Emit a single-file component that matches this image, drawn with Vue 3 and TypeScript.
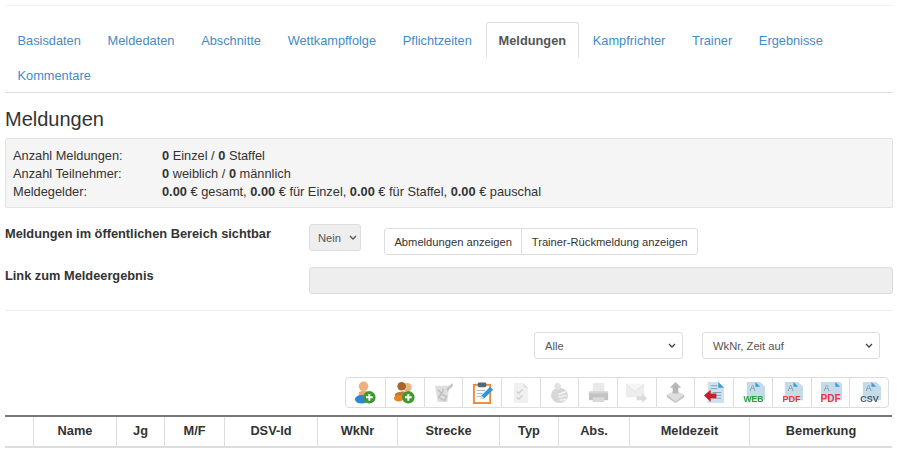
<script setup lang="ts">
const tabs: string[] = ['Basisdaten','Meldedaten','Abschnitte','Wettkampffolge','Pflichtzeiten','Meldungen','Kampfrichter','Trainer','Ergebnisse','Kommentare']
const cols: string[] = ['','Name','Jg','M/F','DSV-Id','WkNr','Strecke','Typ','Abs.','Meldezeit','Bemerkung']
const docs = [
  { label: 'WEB', color: '#2e9e44', size: 9, x: 5 },
  { label: 'PDF', color: '#ef3340', size: 9.5, x: 5 },
  { label: 'PDF', color: '#ef3340', size: 10.5, x: 2 },
  { label: 'CSV', color: '#4a5a66', size: 9.5, x: 5 },
]
</script>

<template>
  <div class="page">
    <div class="topline"></div>
    <ul class="tabs">
      <li v-for="t in tabs" :key="t" :class="{ active: t === 'Meldungen' }"><a>{{ t }}</a></li>
    </ul>
    <h3>Meldungen</h3>
    <div class="well">
      <div class="wrow"><span class="k">Anzahl Meldungen:</span><span><b>0</b> Einzel / <b>0</b> Staffel</span></div>
      <div class="wrow"><span class="k">Anzahl Teilnehmer:</span><span><b>0</b> weiblich / <b>0</b> männlich</span></div>
      <div class="wrow"><span class="k">Meldegelder:</span><span><b>0.00</b> € gesamt, <b>0.00</b> € für Einzel, <b>0.00</b> € für Staffel, <b>0.00</b> € pauschal</span></div>
    </div>
    <div class="form-row first">
      <label>Meldungen im öffentlichen Bereich sichtbar</label>
      <div class="field">
        <div class="sel disabled nein"><span>Nein</span><svg width="8" height="5" viewBox="0 0 8 5"><path d="M1 1l3 3 3-3" fill="none" stroke="#555" stroke-width="1.3"/></svg></div>
        <div class="btns">
          <button>Abmeldungen anzeigen</button>
          <button>Trainer-Rückmeldung anzeigen</button>
        </div>
      </div>
    </div>
    <div class="form-row second">
      <label>Link zum Meldeergebnis</label>
      <div class="linkbox"></div>
    </div>
    <hr />
    <div class="filters">
      <div class="sel alle"><span>Alle</span><svg width="8" height="5" viewBox="0 0 8 5"><path d="M1 1l3 3 3-3" fill="none" stroke="#444" stroke-width="1.3"/></svg></div>
      <div class="sel sort"><span>WkNr, Zeit auf</span><svg width="8" height="5" viewBox="0 0 8 5"><path d="M1 1l3 3 3-3" fill="none" stroke="#444" stroke-width="1.3"/></svg></div>
    </div>
    <div class="toolbar-wrap">
      <div class="toolbar">
        <div class="tb">
          <svg class="ic" viewBox="0 0 24 24"><circle cx="10" cy="5.5" r="5" fill="#f2b07a"/><path d="M5 12c2-2 8-2 10 0v5H5z" fill="#f0a868"/><ellipse cx="8" cy="19" rx="7" ry="4.5" fill="#2b86d6"/><circle cx="16" cy="17" r="6.5" fill="#3f9a2e"/><path d="M16 13.5v7M12.5 17h7" stroke="#fff" stroke-width="2"/></svg>
        </div>
        <div class="tb">
          <svg class="ic" viewBox="0 0 24 24"><circle cx="15" cy="6.5" r="4.5" fill="#e9b583"/><circle cx="9" cy="5.5" r="4.5" fill="#a8652e"/><path d="M2 14c1-3 14-5 17 0v4H3z" fill="#bd7a3c"/><ellipse cx="6" cy="18" rx="5" ry="3.5" fill="#e8861f"/><circle cx="16" cy="17" r="6.5" fill="#3f9a2e"/><path d="M16 13.5v7M12.5 17h7" stroke="#fff" stroke-width="2"/></svg>
        </div>
        <div class="tb">
          <svg class="ic faint" viewBox="0 0 24 24"><path d="M3 5h15l-2 17H6z" fill="#d4d4d4"/><path d="M15 8l6-6 1 3-6 6z" fill="#b0b0b0"/><path d="M6 9l4 4-3 4 5 3M12 8l-2 6 5 2-2 5" fill="none" stroke="#aaa" stroke-width="1.6"/></svg>
        </div>
        <div class="tb">
          <svg class="ic" viewBox="0 0 24 24"><rect x="3" y="4" width="17" height="19" fill="#fff" stroke="#ee8a3a" stroke-width="2"/><rect x="7" y="1.5" width="9" height="5" rx="1.5" fill="#56697a"/><path d="M6 10h9M6 13h6M6 16h5" stroke="#9bb5c8"/><path d="M10 19l1-4L20 6l3 3-9 9z" fill="#2b95dd"/><path d="M10 19l1-4 3 3z" fill="#f4d9a8"/></svg>
        </div>
        <div class="tb">
          <svg class="ic faint" viewBox="0 0 24 24"><path d="M5 2h10l5 5v16H5z" fill="#ececec"/><path d="M15 2v5h5z" fill="#d8d8d8"/><path d="M8 11l2 2 4-4M8 17l2 2 4-4" fill="none" stroke="#c4c4c4" stroke-width="1.5"/></svg>
        </div>
        <div class="tb">
          <svg class="ic dim" viewBox="0 0 24 24"><ellipse cx="12" cy="15" rx="9" ry="8" fill="#cecece"/><circle cx="10" cy="5.5" r="3.5" fill="#dcdcdc"/><path d="M11 14l8-3M11 17l9-2M12 20l7-1" stroke="#f2f2f2" stroke-width="1.6"/></svg>
        </div>
        <div class="tb">
          <svg class="ic dim" viewBox="0 0 24 24"><rect x="6" y="2" width="12" height="9" fill="#e4e4e4"/><path d="M2 11h20v9H2z" fill="#b4b4b4"/><rect x="6" y="17" width="12" height="5" fill="#d0d0d0"/><path d="M2 11h20v2H2z" fill="#cacaca"/></svg>
        </div>
        <div class="tb">
          <svg class="ic faint" viewBox="0 0 24 24"><rect x="1" y="3" width="19" height="14" fill="#e8e8e8"/><path d="M1 3l9.5 8L20 3" fill="#f2f2f2" stroke="#dcdcdc"/><path d="M12 16h6v-3l5 5-5 5v-3h-6z" fill="#d0d0d0"/></svg>
        </div>
        <div class="tb">
          <svg class="ic faint" viewBox="0 0 24 24"><path d="M3 14l9-4 9 4-9 7z" fill="#d4d4d4"/><path d="M3 14v3l9 6 9-6v-3l-9 7z" fill="#b0b0b0"/><path d="M12 1l6 6h-3v6H9V7H6z" fill="#a0a0a0"/></svg>
        </div>
        <div class="tb">
          <svg class="ic" viewBox="0 0 24 24"><path d="M5 1h11l6 6v16H5z" fill="#cfe2ef"/><path d="M16 1v6h6z" fill="#3f9bd6"/><path d="M8 5h7M8 8h7M10 12h9M10 15h9M10 18h9" stroke="#7f9db3"/><path d="M1 15l7-6v4h6v5H8v4z" fill="#c8202a"/></svg>
        </div>
        <div v-for="(d, i) in docs" :key="i" class="tb">
          <svg class="ic" viewBox="0 0 24 24">
            <path :d="`M${d.x} 1h${19 - 2 * d.x + 5}l5 5v14H${d.x}z`" fill="#c4dbea"/><path :d="`M${24 - d.x - 5} 1v5h5z`" fill="#3f9bd6"/>
            <text :x="d.x + 3" y="10" font-size="9" fill="#7f909c" font-family="Liberation Sans, sans-serif">A</text>
            <text x="12" y="21.5" text-anchor="middle" :font-size="d.size" font-weight="700" :fill="d.color" font-family="Liberation Sans, sans-serif">{{ d.label }}</text>
          </svg>
        </div>
      </div>
    </div>
    <div class="table-head">
      <div v-for="(c, i) in cols" :key="i" class="th">{{ c }}</div>
    </div>
  </div>
</template>

<style scoped>
.page {
  width: 899px;
  height: 461px;
  box-sizing: border-box;
  padding: 5px 6px 0 5px;
  font-family: "Liberation Sans", Arial, sans-serif;
  font-size: 12.8px;
  color: #333;
  background: #fff;
  overflow: hidden;
}
.topline { height: 1px; background: #f2f2f2; margin-bottom: 16px; }
.tabs {
  list-style: none;
  margin: 0;
  padding: 0;
  display: flex;
  flex-wrap: wrap;
  height: 70px;
  border-bottom: 1px solid #ddd;
  box-sizing: content-box;
}
.tabs li { height: 35px; margin-right: 1.7px; }
.tabs a {
  display: block;
  box-sizing: border-box;
  height: 36px;
  padding: 8px 11.52px;
  line-height: 19px;
  color: #428bca;
  border: 1px solid transparent;
  border-radius: 3px 3px 0 0;
}
.tabs .active a {
  color: #555;
  font-weight: 700;
  border-color: #ddd;
  border-bottom-color: transparent;
}
h3 {
  margin: 15px 0 8px;
  font-size: 20px;
  font-weight: 400;
  line-height: 22px;
  color: #333;
}
.well {
  height: 70px;
  box-sizing: border-box;
  padding: 8px 7px;
  background: #f5f5f5;
  border: 1px solid #e3e3e3;
  border-radius: 2px;
  line-height: 18px;
}
.wrow { display: flex; }
.k { width: 149px; }
.form-row { display: flex; }
.form-row label { width: 304px; font-weight: 700; line-height: 18px; }
.first { margin-top: 16px; height: 43px; }
.first label { padding-top: 1px; }
.second { height: 43px; }
.field { display: flex; align-items: flex-start; }
.sel {
  display: flex;
  align-items: center;
  justify-content: space-between;
  box-sizing: border-box;
  height: 27px;
  padding: 0 6px 0 10px;
  border: 1px solid #ddd;
  border-radius: 3px;
  background: #fff;
  font-size: 11.2px;
  color: #555;
}
.disabled { background: #eee; }
.nein { width: 52px; padding: 0 3px 0 8px; }
.btns { display: flex; margin-left: 23px; margin-top: 4px; }
button {
  height: 27px;
  padding: 0 9.4px;
  font: inherit;
  font-size: 11.2px;
  color: #333;
  background: #fff;
  border: 1px solid #ddd;
  border-radius: 3px 0 0 3px;
}
button + button { margin-left: -1px; border-radius: 0 3px 3px 0; }
.linkbox {
  width: 584px;
  height: 27px;
  box-sizing: border-box;
  background: #eee;
  border: 1px solid #ddd;
  border-radius: 3px;
}
hr { margin: 0 0 21px; border: 0; border-top: 1px solid #eee; }
.filters { display: flex; height: 27px; padding-left: 529px; }
.alle { width: 149px; }
.sort { width: 178px; margin-left: 19px; }
.toolbar-wrap { display: flex; justify-content: flex-end; margin-top: 18px; padding-right: 4px; }
.toolbar {
  display: flex;
  height: 31px;
  box-sizing: border-box;
  border: 1px solid #ddd;
  border-radius: 4px;
}
.tb {
  box-sizing: border-box;
  width: 38.71px;
  height: 29px;
  display: flex;
  align-items: center;
  justify-content: center;
  border-left: 1px solid #ddd;
}
.tb:first-child { border-left: 0; }
.ic { width: 23px; height: 23px; filter: blur(0.45px); }
.dim { opacity: 0.8; }
.faint { opacity: 0.75; }
.table-head {
  display: grid;
  grid-template-columns: 28px 83px 48px 60px 93px 80px 102px 59px 71px 120px 143px;
  height: 33px;
  margin-top: 7px;
  box-sizing: border-box;
  border-top: 2px solid #777;
  border-bottom: 2px solid #ddd;
  width: 887px;
}
.th {
  display: flex;
  align-items: center;
  justify-content: center;
  padding-bottom: 2px;
  font-weight: 700;
  border-left: 1px solid #ddd;
}
.th:first-child { border-left: 0; }
</style>
